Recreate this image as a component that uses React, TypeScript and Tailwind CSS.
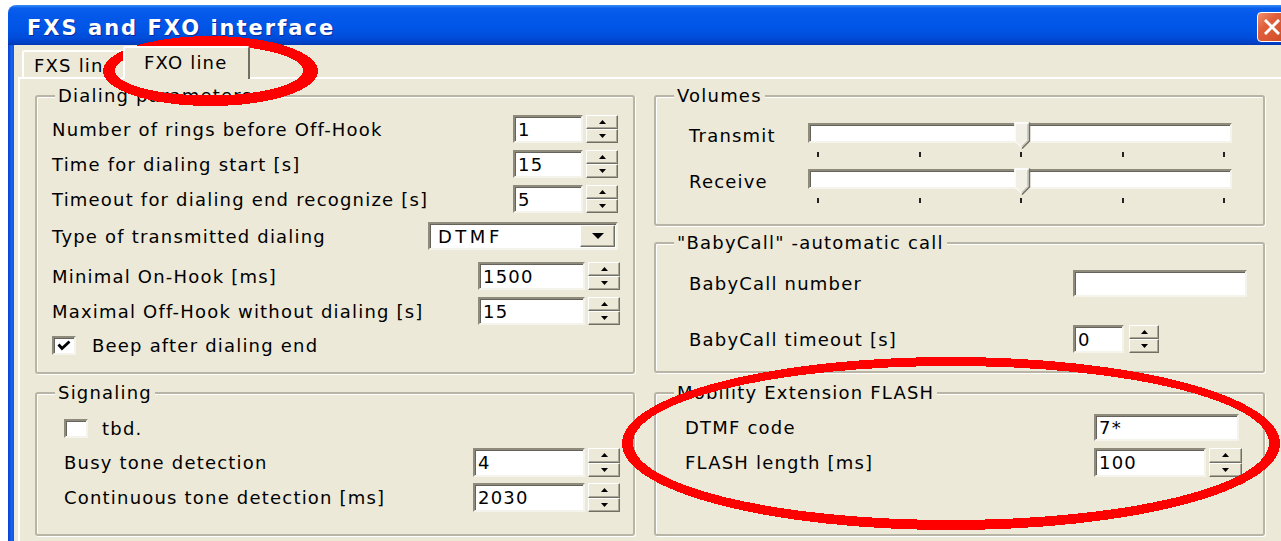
import React from "react";

// Classic Windows 3D edges
const sunken =
  "bg-white border-2 border-t-[#8e8b7c] border-l-[#8e8b7c] border-b-[#f4f3ec] border-r-[#f4f3ec] shadow-[inset_1px_1px_0_#66645a]";
const raised =
  "bg-[#ece9d8] border border-t-white border-l-white border-b-[#716f64] border-r-[#716f64] shadow-[inset_-1px_-1px_0_#aca899]";

function Tri({ up = false }: { up?: boolean }) {
  return (
    <svg width="7" height="4" viewBox="0 0 7 4">
      {up ? <path d="M3.5 0 L7 4 H0 Z" fill="#000" /> : <path d="M0 0 H7 L3.5 4 Z" fill="#000" />}
    </svg>
  );
}

function Edit({ value, className = "" }: { value: string; className?: string }) {
  return (
    <div className={`${sunken} flex items-center pl-[3px] overflow-hidden whitespace-nowrap ${className}`}>
      {value}
    </div>
  );
}

function SpinButtons({ className = "" }: { className?: string }) {
  return (
    <div className={`flex flex-col ${className}`}>
      <div className={`${raised} flex-1 flex items-center justify-center`}>
        <Tri up />
      </div>
      <div className={`${raised} flex-1 flex items-center justify-center`}>
        <Tri />
      </div>
    </div>
  );
}

function Spin({
  value,
  w,
  btn = "w-[32px]",
  gap = "gap-[3px]",
}: {
  value: string;
  w: string;
  btn?: string;
  gap?: string;
}) {
  return (
    <div className={`flex ${gap} h-full`}>
      <Edit value={value} className={`h-full ${w}`} />
      <SpinButtons className={`h-full ${btn}`} />
    </div>
  );
}

function Check({ checked = false }: { checked?: boolean }) {
  return (
    <div className={`${sunken} w-[24px] h-[19px] flex items-center justify-center shrink-0`}>
      {checked && (
        <svg width="14" height="11" viewBox="0 0 14 11">
          <path d="M1.5 4.5 L5 8.5 L12.5 1.5" stroke="#000" strokeWidth="2.8" fill="none" />
        </svg>
      )}
    </div>
  );
}

function Group({
  title,
  className = "",
  inner = "",
  children,
}: {
  title: string;
  className?: string;
  inner?: string;
  children: React.ReactNode;
}) {
  return (
    <fieldset
      className={`border-2 border-[#b8b5a6] rounded-[3px] shadow-[inset_1px_1px_0_#fff,1px_1px_0_#fff] ${className}`}
    >
      <legend className="ml-[18px] px-[3px] leading-[22px] bg-[#ece9d8] whitespace-nowrap">{title}</legend>
      <div className={inner}>{children}</div>
    </fieldset>
  );
}

function Row({
  label,
  className = "",
  children,
}: {
  label: string;
  className?: string;
  children: React.ReactNode;
}) {
  return (
    <div className={`flex items-center justify-between h-[28px] whitespace-nowrap ${className}`}>
      <span>{label}</span>
      {children}
    </div>
  );
}

function Thumb() {
  return (
    <svg className="absolute left-[206px] top-0" width="17" height="27" viewBox="0 0 17 27">
      <path d="M0.5 0.5 H15.5 V19 L8 26.5 L0.5 19 Z" fill="#f1efe6" />
      <path d="M1 19 V1 H15" stroke="#fff" strokeWidth="1.5" fill="none" />
      <path d="M1 19 L8 26" stroke="#fff" strokeWidth="1" fill="none" />
      <path d="M15.5 0.5 V19 L8 26.5" stroke="#716f64" strokeWidth="1.5" fill="none" />
      <path d="M14 2 V18.5 L8 24.5" stroke="#aca899" strokeWidth="1" fill="none" />
    </svg>
  );
}

function Slider() {
  return (
    <div className="w-[424px]">
      <div className="relative h-[26px] pt-[1px]">
        <div className={`${sunken} h-[20px]`} />
        <Thumb />
      </div>
      <div className="flex justify-between pl-[9px] pr-[7px] mt-[4px]">
        {[0, 1, 2, 3, 4].map((i) => (
          <div key={i} className="w-[2px] h-[5px] bg-[#222]" />
        ))}
      </div>
    </div>
  );
}

function ringPath(
  cx: number,
  cy: number,
  rx: number,
  ry: number,
  icx: number,
  icy: number,
  irx: number,
  iry: number
) {
  const e = (x: number, y: number, a: number, b: number) =>
    `M${x - a} ${y} A${a} ${b} 0 1 0 ${x + a} ${y} A${a} ${b} 0 1 0 ${x - a} ${y} Z`;
  return `${e(cx, cy, rx, ry)} ${e(icx, icy, irx, iry)}`;
}

export default function App() {
  return (
    <div className="relative w-[1281px] h-[541px] overflow-hidden bg-white font-['DejaVu_Sans',sans-serif] text-[18px] tracking-[1.2px] text-black">
      <div className="ml-[8px] mt-[5px] w-[1290px] h-[600px] flex flex-col">
        {/* Title bar */}
        <div className="h-[40px] shrink-0 rounded-t-[8px] flex bg-[linear-gradient(to_bottom,#3d8ef7_0px,#0a60ec_3px,#0459eb_9px,#0055e6_24px,#004cd9_33px,#003fc4_38px,#0036b0_40px)]">
          <div className="mt-[12px] leading-[22px] pl-[19px] text-white font-bold text-[21px] tracking-[2px] whitespace-nowrap [text-shadow:1px_1px_0_#0a2a9e]">
            FXS and FXO interface
          </div>
          <div className="ml-auto mr-[11px] mt-[7px] w-[30px] h-[30px] rounded-[4px] border border-white bg-[linear-gradient(135deg,#f0906f_0%,#e0603b_35%,#cf4a26_100%)] flex items-center justify-center">
            <svg width="16" height="16" viewBox="0 0 16 16">
              <path d="M2 2 L14 14 M14 2 L2 14" stroke="#fff" strokeWidth="3" strokeLinecap="square" />
            </svg>
          </div>
        </div>

        {/* Window body */}
        <div className="flex-1 flex bg-[#ece9d8]">
          <div className="w-[6px] bg-[linear-gradient(to_right,#0a3fd0,#1664ee_60%,#0a55e6)]" />
          <div className="flex-1 flex flex-col">
            {/* Tabs */}
            <div className="flex items-end h-[32px] pl-[8px] shrink-0">
              <div className="w-[101px] h-[27px] border-t-2 border-l-2 border-white rounded-tl-[3px] flex items-center pl-[10px] pt-[2px] whitespace-nowrap">
                FXS line
              </div>
              <div className="relative z-10 -mb-[2px] w-[127px] h-[33px] border-t-2 border-l-2 border-r-2 border-t-white border-l-white border-r-[#716f64] rounded-t-[3px] bg-[#ece9d8] flex items-center pl-[19px] pb-[3px] whitespace-nowrap">
                FXO line
              </div>
            </div>

            {/* Tab page */}
            <div className="flex-1 ml-[4px] border-t-2 border-l-2 border-white pt-[6px] pl-[15px] flex gap-[19px]">
              {/* Left column */}
              <div className="flex flex-col w-[600px] gap-[8px]">
                <Group title="Dialing parameters" className="w-[600px] h-[289px]" inner="pl-[15px] pr-[15px]">
                  <Row className="mt-[8px]" label="Number of rings before Off-Hook">
                    <Spin value="1" w="w-[70px]" />
                  </Row>
                  <Row className="mt-[7px]" label="Time for dialing start [s]">
                    <Spin value="15" w="w-[70px]" />
                  </Row>
                  <Row className="mt-[7px]" label="Timeout for dialing end recognize [s]">
                    <Spin value="5" w="w-[70px]" />
                  </Row>
                  <Row className="mt-[9px]" label="Type of transmitted dialing">
                    <div
                      className={`${sunken} w-[190px] h-[28px] flex items-center justify-between pl-[8px] pr-[1px] tracking-[3.5px]`}
                    >
                      DTMF
                      <div className={`${raised} w-[35px] h-[22px] flex items-center justify-center`}>
                        <svg width="12" height="6" viewBox="0 0 12 6">
                          <path d="M0 0 H12 L6 6 Z" fill="#000" />
                        </svg>
                      </div>
                    </div>
                  </Row>
                  <Row className="mt-[12px] -mr-[2px]" label="Minimal On-Hook [ms]">
                    <Spin value="1500" w="w-[107px]" />
                  </Row>
                  <Row className="mt-[7px] -mr-[2px]" label="Maximal Off-Hook without dialing [s]">
                    <Spin value="15" w="w-[107px]" />
                  </Row>
                  <div className="mt-[6px] h-[28px] flex items-center gap-[16px] whitespace-nowrap">
                    <Check checked />
                    <span>Beep after dialing end</span>
                  </div>
                </Group>

                <Group title="Signaling" className="w-[600px] h-[154px]" inner="pl-[27px] pr-[13px]">
                  <div className="mt-[10px] h-[28px] flex items-center gap-[14px] whitespace-nowrap">
                    <Check />
                    <span>tbd.</span>
                  </div>
                  <Row className="mt-[6px] h-[29px]" label="Busy tone detection">
                    <Spin value="4" w="w-[112px]" />
                  </Row>
                  <Row className="mt-[6px] h-[29px]" label="Continuous tone detection [ms]">
                    <Spin value="2030" w="w-[112px]" />
                  </Row>
                </Group>
              </div>

              {/* Right column */}
              <div className="flex flex-col w-[611px]">
                <Group title="Volumes" className="w-[611px] h-[141px]" inner="pl-[33px]">
                  <div className="mt-[15px] flex items-start">
                    <div className="w-[119px] h-[26px] flex items-center">Transmit</div>
                    <Slider />
                  </div>
                  <div className="mt-[11px] flex items-start">
                    <div className="w-[119px] h-[26px] flex items-center">Receive</div>
                    <Slider />
                  </div>
                </Group>

                <Group
                  title={'"BabyCall" -automatic call'}
                  className="mt-[6px] w-[611px] h-[141px]"
                  inner="pl-[33px]"
                >
                  <div className="mt-[16px] h-[27px] flex items-center whitespace-nowrap">
                    <div className="w-[384px]">BabyCall number</div>
                    <Edit value="" className="w-[174px] h-[27px]" />
                  </div>
                  <div className="mt-[28px] h-[28px] flex items-center whitespace-nowrap">
                    <div className="w-[384px]">BabyCall timeout [s]</div>
                    <Spin value="0" w="w-[51px]" btn="w-[30px]" gap="gap-[5px]" />
                  </div>
                </Group>

                <Group title="Mobility Extension FLASH" className="mt-[9px] w-[611px] h-[154px]" inner="pl-[29px]">
                  <div className="mt-[10px] h-[27px] flex items-center whitespace-nowrap">
                    <div className="w-[409px]">DTMF code</div>
                    <Edit value="7*" className="w-[145px] h-[27px]" />
                  </div>
                  <div className="mt-[7px] h-[29px] flex items-center whitespace-nowrap">
                    <div className="w-[409px]">FLASH length [ms]</div>
                    <Spin value="100" w="w-[112px]" btn="w-[33px]" />
                  </div>
                </Group>
              </div>
            </div>
          </div>
        </div>
      </div>

      {/* Red marker rings drawn over the dialog */}
      <svg
        className="absolute left-0 top-0 pointer-events-none"
        width="1281"
        height="541"
        viewBox="0 0 1281 541"
        shapeRendering="crispEdges"
      >
        <path
          fillRule="evenodd"
          fill="#ff0000"
          d={ringPath(210.5, 71, 107.5, 35, 209, 70.5, 94, 25)}
        />
        <path
          fillRule="evenodd"
          fill="#ff0000"
          d={ringPath(951, 443.5, 329, 86.5, 951, 443, 318, 77)}
        />
      </svg>
    </div>
  );
}
